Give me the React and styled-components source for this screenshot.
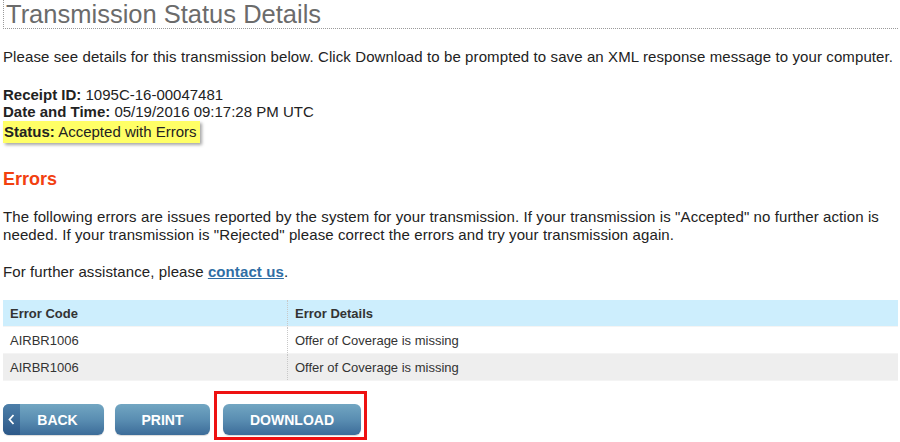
import React from "react";
import styled, { createGlobalStyle } from "styled-components";

const GlobalStyle = createGlobalStyle`
  body {
    margin: 0;
    background: #ffffff;
    font-family: "Liberation Sans", Arial, sans-serif;
    color: #222222;
  }
`;

const Page = styled.main`
  width: 900px;
  padding-left: 3px;
  box-sizing: border-box;
`;

const Title = styled.h1`
  margin: 0;
  font-size: 25.5px;
  font-weight: normal;
  line-height: 28px;
  color: #6b6b6b;
  padding-left: 2px;
  border-left: 1px dotted #9a9a9a;
  border-bottom: 1px dotted #9a9a9a;
  margin-right: 2px;
`;

const Para = styled.p`
  margin: ${(p) => p.$top || 19}px 0 0;
  font-size: 15px;
  line-height: 18px;
  letter-spacing: 0.1px;
  color: #222222;
`;

const Info = styled.div`
  margin-top: 20px;
  font-size: 15px;
  line-height: 17px;
`;

const Label = styled.b`
  font-weight: bold;
`;

const StatusLine = styled.div`
  display: inline-block;
  margin-top: 1px;
  padding: 2px 3px 2px 1px;
  line-height: 18px;
  background: #ffff66;
  box-shadow: 2px 2px 3px rgba(0, 0, 0, 0.35);
`;

const Heading = styled.h2`
  margin: 25px 0 0;
  font-size: 18px;
  line-height: 22px;
  font-weight: bold;
  color: #f2400f;
`;

const Link = styled.a`
  color: #2f6ea5;
  font-weight: bold;
  text-decoration: underline;
`;

const Table = styled.table`
  margin-top: 19px;
  width: 895px;
  border-collapse: collapse;
  font-size: 13px;
  color: #333333;
`;

const Row = styled.tr`
  background: ${(p) => (p.$head ? "#cdeefd" : p.$alt ? "#eeeeee" : "#ffffff")};
  border-bottom: 1px solid #f4f4f4;
`;

const Cell = styled.td`
  height: 26px;
  padding: 0 7px;
  font-weight: ${(p) => (p.$head ? "bold" : "normal")};
  text-align: left;
  width: ${(p) => p.$w || "auto"};
  & + & {
    border-left: 1px dotted #c8c8c8;
  }
`;

const Actions = styled.div`
  margin-top: 23px;
  display: flex;
  gap: 11px;
  align-items: flex-start;
`;

const Button = styled.button`
  position: relative;
  display: block;
  height: 31px;
  width: ${(p) => p.$w}px;
  border: none;
  border-radius: 6px;
  padding: 0 0 0 ${(p) => (p.$back ? 8 : 0)}px;
  background: linear-gradient(#72a6c2, #5a8eb2 50%, #3c6c99);
  color: #ffffff;
  font-family: "Liberation Sans", Arial, sans-serif;
  font-size: 14px;
  font-weight: bold;
  overflow: hidden;
  box-shadow: 0 1px 1px rgba(0, 0, 0, 0.15);
  cursor: pointer;
`;

const Chevron = styled.span`
  position: absolute;
  left: 0;
  top: 0;
  bottom: 0;
  width: 17px;
  display: flex;
  align-items: center;
  justify-content: center;
  background: linear-gradient(#4d7fa9, #2d5888);
`;

const Highlight = styled.div`
  display: flex;
  border: 3px solid #ee1111;
  padding: 10px 3px 2px 6px;
  margin: -13px 0 0 -7px;
`;

const rows = [
  { code: "AIRBR1006", detail: "Offer of Coverage is missing" },
  { code: "AIRBR1006", detail: "Offer of Coverage is missing" },
];

export default function App() {
  return (
    <Page>
      <GlobalStyle />
      <Title>Transmission Status Details</Title>
      <Para>
        Please see details for this transmission below. Click Download to be prompted to save an XML
        response message to your computer.
      </Para>
      <Info>
        <div>
          <Label>Receipt ID:</Label> 1095C-16-00047481
        </div>
        <div>
          <Label>Date and Time:</Label> 05/19/2016 09:17:28 PM UTC
        </div>
        <StatusLine>
          <Label>Status:</Label> Accepted with Errors
        </StatusLine>
      </Info>
      <Heading>Errors</Heading>
      <Para $top={18}>
        The following errors are issues reported by the system for your transmission. If your
        transmission is "Accepted" no further action is needed. If your transmission is "Rejected"
        please correct the errors and try your transmission again.
      </Para>
      <Para>
        For further assistance, please <Link href="#">contact us</Link>.
      </Para>
      <Table>
        <tbody>
          <Row $head>
            <Cell $head $w="270px">Error Code</Cell>
            <Cell $head>Error Details</Cell>
          </Row>
          {rows.map((r, i) => (
            <Row key={i} $alt={i % 2 === 1}>
              <Cell>{r.code}</Cell>
              <Cell>{r.detail}</Cell>
            </Row>
          ))}
        </tbody>
      </Table>
      <Actions>
        <Button $w={101} $back>
          <Chevron>
            <svg width="7" height="11" viewBox="0 0 7 11">
              <path d="M5.5 1 L1.5 5.5 L5.5 10" fill="none" stroke="#fff" strokeWidth="1.8" />
            </svg>
          </Chevron>
          BACK
        </Button>
        <Button $w={95}>PRINT</Button>
        <Highlight>
          <Button $w={138}>DOWNLOAD</Button>
        </Highlight>
      </Actions>
    </Page>
  );
}
